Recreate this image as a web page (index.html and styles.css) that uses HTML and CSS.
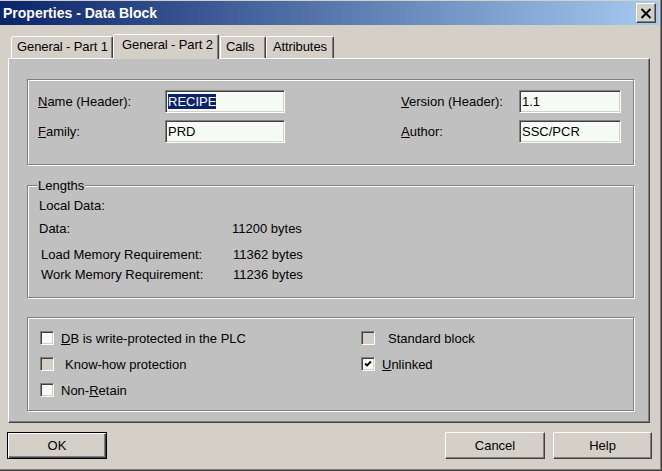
FILE: index.html
```html
<!DOCTYPE html>
<html>
<head>
<meta charset="utf-8">
<title>Properties - Data Block</title>
<link rel="stylesheet" href="styles.css">
</head>
<body>
<div class="window">
  <div class="titlebar">
    <span class="title">Properties - Data Block</span>
    <span class="close"><svg width="12" height="11" viewBox="0 0 12 11"><path d="M1.5 1 L10.5 10 M10.5 1 L1.5 10" stroke="#000" stroke-width="2" fill="none"/></svg></span>
  </div>
  <div class="tabs">
    <div class="tab t1">General - Part 1</div>
    <div class="tab active">General - Part 2</div>
    <div class="tab t3">Calls</div>
    <div class="tab t4">Attributes</div>
  </div>
  <div class="page">
    <div class="group header-group">
      <span class="lbl"><u>N</u>ame (Header):</span>
      <span class="input"><span class="sel">RECIPE</span></span>
      <span></span>
      <span class="lbl"><u>V</u>ersion (Header):</span>
      <span class="input">1.1</span>
      <span class="lbl"><u>F</u>amily:</span>
      <span class="input">PRD</span>
      <span></span>
      <span class="lbl"><u>A</u>uthor:</span>
      <span class="input">SSC/PCR</span>
    </div>
    <fieldset class="group lengths">
      <legend>Lengths</legend>
      <div class="lrow r1"><span>Local Data:</span></div>
      <div class="lrow r2"><span class="k">Data:</span><span>11200 bytes</span></div>
      <div class="lrow r3"><span class="k">Load Memory Requirement:</span><span>11362 bytes</span></div>
      <div class="lrow r4"><span class="k">Work Memory Requirement:</span><span>11236 bytes</span></div>
    </fieldset>
    <div class="group checks">
      <div class="check"><span class="box"></span><span><u>D</u>B is write-protected in the PLC</span></div>
      <div class="check"><span class="box disabled"></span><span class="pad4">Know-how protection</span></div>
      <div class="check"><span class="box"></span><span>Non-<u>R</u>etain</span></div>
      <div class="check"><span class="box disabled"></span><span class="pad6">Standard block</span></div>
      <div class="check"><span class="box"><svg width="8" height="8" viewBox="0 0 8 8"><path d="M1 3.5 L3 5.5 L7 1.5" stroke="#000" stroke-width="1.8" fill="none"/></svg></span><span><u>U</u>nlinked</span></div>
    </div>
  </div>
  <div class="buttons">
    <div class="btn default">OK</div>
    <div class="btn cancel">Cancel</div>
    <div class="btn help">Help</div>
  </div>
</div>
</body>
</html>
```
FILE: styles.css
```css
* { box-sizing: border-box; }
html, body { margin: 0; padding: 0; }
body {
  font-family: "Liberation Sans", Arial, sans-serif;
  font-size: 13px;
  color: #000;
  background: #d4d0c8;
}
.window {
  width: 662px;
  height: 471px;
  background: #d4d0c8;
  padding-top: 1px;
  border-right: 1px solid #404040;
  border-bottom: 1px solid #404040;
  box-shadow: inset -1px -1px 0 #808080;
  display: flex;
  flex-direction: column;
}
.titlebar {
  height: 24px;
  margin-right: 2px;
  background: linear-gradient(to right, #0a246a, #a6caf0);
  display: flex;
  align-items: center;
  justify-content: space-between;
  padding: 0 3px 0 3px;
}
.title {
  color: #fff;
  font-weight: bold;
  font-size: 14px;
}
.close {
  width: 20px;
  height: 20px;
  background: #d4d0c8;
  border: 1px solid;
  border-color: #fff #404040 #404040 #fff;
  box-shadow: inset -1px -1px 0 #808080;
  display: flex;
  align-items: center;
  justify-content: center;
}
.tabs {
  display: flex;
  align-items: flex-end;
  height: 24px;
  margin-top: 9px;
  padding-left: 11px;
  position: relative;
  z-index: 1;
}
.tab {
  height: 22px;
  padding: 0 0 0 5px;
  border: 1px solid;
  border-bottom: none;
  border-color: #fff #404040 transparent #fff;
  box-shadow: inset -1px 0 0 #808080;
  border-radius: 2px 2px 0 0;
  background: #d4d0c8;
  line-height: 20px;
  white-space: nowrap;
  overflow: hidden;
  letter-spacing: -0.1px;
}
.t1 { width: 102px; }
.tab.active {
  width: 106px;
  height: 25px;
  margin-bottom: -1px;
  padding-left: 8px;
}
.t3 { width: 46px; margin-left: 1px; padding-left: 5px; }
.t4 { width: 68px; padding-left: 6px; }
.page {
  margin-left: 8px;
  width: 642px;
  height: 365px;
  border: 1px solid;
  border-color: #fff #404040 #404040 #fff;
  box-shadow: inset -1px -1px 0 #808080;
  background: #c0c0c0;
  padding: 20px 15px 0 18px;
}
.group {
  border: 1px solid #808080;
  box-shadow: inset 1px 1px 0 #fff, 1px 1px 0 #fff;
}
.header-group {
  height: 86px;
  display: grid;
  grid-template-columns: 127px 120px 1fr 118px 102px;
  grid-template-rows: 23px 23px;
  row-gap: 7px;
  align-items: center;
  padding: 10px 12px 0 10px;
}
.input {
  height: 23px;
  background: #f6fbf6;
  border: 1px solid;
  border-color: #808080 #fff #fff #808080;
  box-shadow: inset 1px 1px 0 #404040, inset -1px -1px 0 #d4d0c8;
  padding-left: 2px;
  line-height: 21px;
  white-space: nowrap;
}
.sel {
  background: #0a246a;
  color: #fff;
}
fieldset.lengths {
  margin: 13px 0 0;
  padding: 5px 10px 15px 11px;
  min-width: 0;
}
.lengths legend {
  padding: 0 1px;
  margin-left: -2px;
  line-height: 15px;
  background: #c0c0c0;
}
.lrow {
  display: flex;
  line-height: 15px;
  white-space: nowrap;
}
.lrow .k { width: 193px; }
.r2 { margin-top: 8px; }
.r3 { margin-top: 11px; padding-left: 2px; }
.r3 .k, .r4 .k { width: 192px; }
.r4 { margin-top: 5px; padding-left: 2px; }
.checks {
  margin-top: 19px;
  height: 94px;
  display: grid;
  grid-template-columns: 321px 1fr;
  grid-template-rows: 26px 26px 26px;
  grid-auto-flow: column;
  padding: 7px 0 0 12px;
}
.check {
  display: flex;
  align-items: center;
  white-space: nowrap;
}
.box {
  width: 14px;
  height: 14px;
  border: 1px solid;
  border-color: #808080 #fff #fff #808080;
  box-shadow: inset 1px 1px 0 #404040, inset -1px -1px 0 #d4d0c8;
  background: #f6fbf6;
  margin-right: 7px;
  display: flex;
  align-items: center;
  justify-content: center;
  flex: none;
}
.box.disabled { background: #d4d0c8; }
.pad4 { padding-left: 4px; }
.pad6 { padding-left: 6px; }
.buttons {
  display: flex;
  margin-top: 9px;
  padding-left: 7px;
}
.btn {
  width: 100px;
  height: 27px;
  display: flex;
  align-items: center;
  justify-content: center;
  background: #d4d0c8;
  border: 1px solid;
  border-color: #fff #404040 #404040 #fff;
  box-shadow: inset -1px -1px 0 #808080;
}
.btn.default {
  border: 1px solid #000;
  box-shadow: inset 1px 1px 0 #fff, inset -1px -1px 0 #404040, inset -2px -2px 0 #808080;
}
.btn.cancel { margin-left: auto; }
.btn.help { margin-left: 8px; margin-right: 9px; width: 99px; }
```
